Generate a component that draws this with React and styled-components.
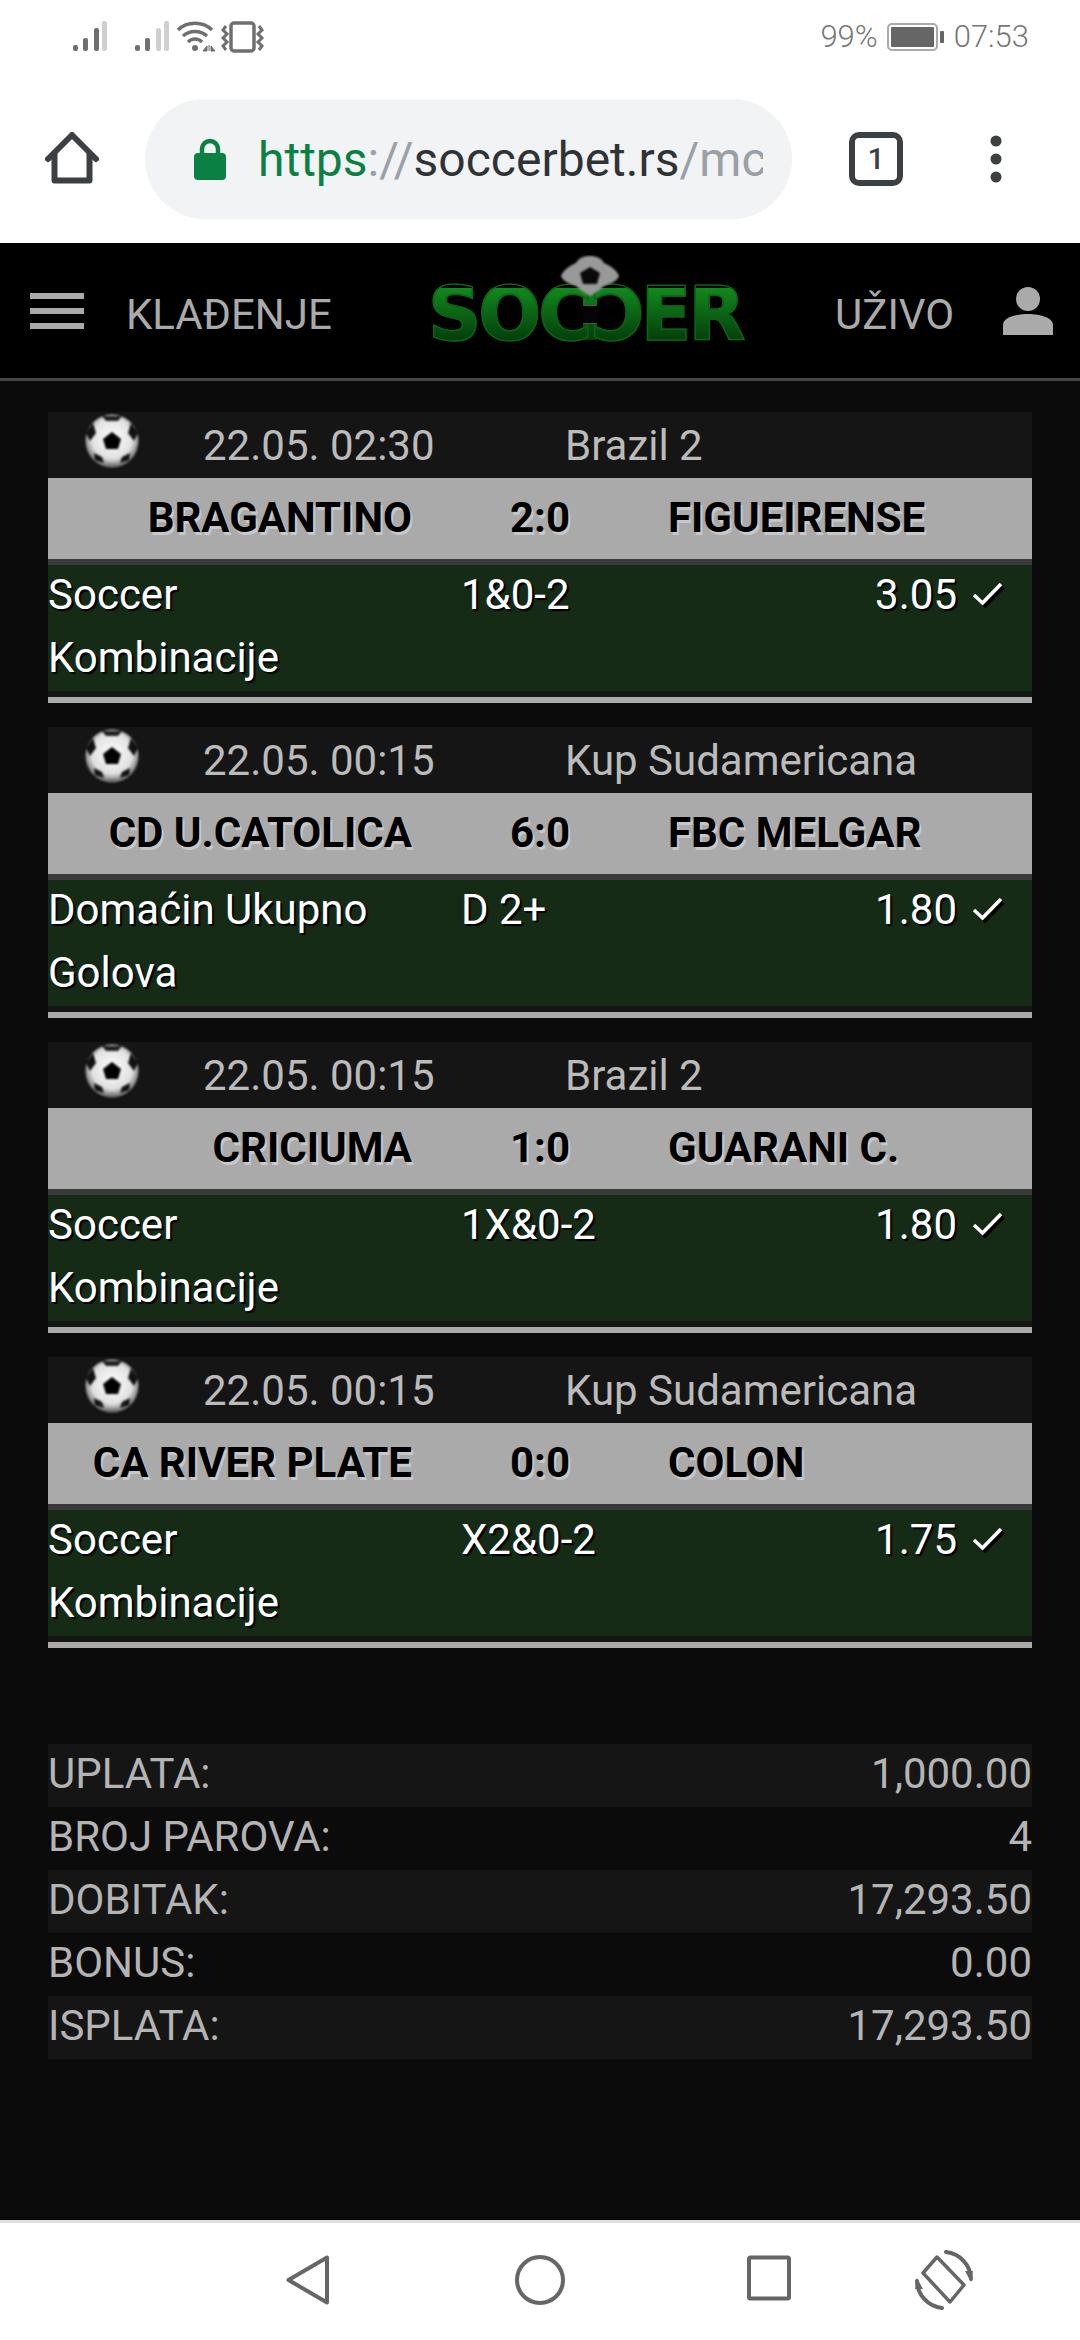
import React from "react";
import styled, { createGlobalStyle } from "styled-components";

const tickets = [
  { time: "22.05. 02:30", league: "Brazil 2", home: "BRAGANTINO", score: "2:0", away: "FIGUEIRENSE", market: "Soccer Kombinacije", pick: "1&0-2", odd: "3.05" },
  { time: "22.05. 00:15", league: "Kup Sudamericana", home: "CD U.CATOLICA", score: "6:0", away: "FBC MELGAR", market: "Domaćin Ukupno Golova", pick: "D 2+", odd: "1.80" },
  { time: "22.05. 00:15", league: "Brazil 2", home: "CRICIUMA", score: "1:0", away: "GUARANI C.", market: "Soccer Kombinacije", pick: "1X&0-2", odd: "1.80" },
  { time: "22.05. 00:15", league: "Kup Sudamericana", home: "CA RIVER PLATE", score: "0:0", away: "COLON", market: "Soccer Kombinacije", pick: "X2&0-2", odd: "1.75" },
];

const summary = [
  ["UPLATA:", "1,000.00"],
  ["BROJ PAROVA:", "4"],
  ["DOBITAK:", "17,293.50"],
  ["BONUS:", "0.00"],
  ["ISPLATA:", "17,293.50"],
];

const Signal = ({ x, lit }) => (
  <g>
    {[
      [0, 24, 6],
      [10, 17, 13],
      [21, 7, 23],
      [29, 0, 30],
    ].map(([dx, y, h], i) => (
      <rect key={i} x={x + dx} y={y} width="5" height={h} rx="2" fill={i < lit ? "#6f6f6f" : "#cfcfcf"} />
    ))}
  </g>
);

const StatusIcons = () => (
  <svg width="192" height="32" viewBox="0 0 192 32">
    <Signal x={0} lit={3} />
    <Signal x={62} lit={2} />
    <g fill="none" stroke="#6f6f6f" strokeWidth="3.5">
      <path d="M105 9 C114 0 130 0 139 9" />
      <path d="M110 15 C117 9 127 9 134 15" />
      <path d="M115 21 C119 17 125 17 129 21" />
    </g>
    <circle cx="122" cy="27" r="3" fill="#6f6f6f" />
    <path d="M130 30 L134 25 V30 Z M136 24 V30 M138 25 L142 30 H138 Z" fill="#6f6f6f" stroke="#6f6f6f" strokeWidth="1" />
    <rect x="158" y="2" width="23" height="28" rx="3" fill="none" stroke="#6f6f6f" strokeWidth="3.5" />
    <path d="M153 5 L150 9 L154 13 L150 17 L154 21 L150 25 L153 29" fill="none" stroke="#6f6f6f" strokeWidth="3" />
    <path d="M186 5 L189 9 L185 13 L189 17 L185 21 L189 25 L186 29" fill="none" stroke="#6f6f6f" strokeWidth="3" />
  </svg>
);

const Battery = () => (
  <svg width="58" height="28" viewBox="0 0 58 28">
    <rect x="1" y="1" width="49" height="26" rx="4" fill="none" stroke="#aaa" strokeWidth="2" />
    <rect x="4" y="4" width="43" height="20" rx="1" fill="#666" />
    <rect x="53" y="8" width="4" height="12" rx="1" fill="#666" />
  </svg>
);

const HomeIcon = () => (
  <svg width="54" height="54" viewBox="0 0 54 54" fill="none" stroke="#3c4043" strokeWidth="6" strokeLinecap="round" strokeLinejoin="round">
    <path d="M3 27 L27 3 L51 27" />
    <path d="M9.500 22 V48.500 H44.500 V22" />
  </svg>
);

const LockIcon = () => (
  <svg width="32" height="42" viewBox="0 0 32 42">
    <path d="M8 18 V11 A8 8 0 0 1 24 11 V18" fill="none" stroke="#0b8043" strokeWidth="4.500" />
    <rect x="0" y="15" width="32" height="27" rx="4" fill="#0b8043" />
  </svg>
);

const MenuDots = () => (
  <svg width="12" height="48" viewBox="0 0 12 48" fill="#3c4043">
    <circle cx="6" cy="6" r="5.500" />
    <circle cx="6" cy="24" r="5.500" />
    <circle cx="6" cy="42" r="5.500" />
  </svg>
);

const PersonIcon = () => (
  <svg width="50" height="48" viewBox="0 0 50 48" fill="#aaa">
    <ellipse cx="25" cy="12" rx="12" ry="12" />
    <path d="M0 48 V38 C0 31 12 27 25 27 C38 27 50 31 50 38 V48 Z" />
  </svg>
);

const Ball = () => (
  <svg width="58" height="56" viewBox="0 0 58 56">
    <defs>
      <radialGradient id="ballShade" cx="50%" cy="45%" r="55%">
        <stop offset="0%" stopColor="#fff" />
        <stop offset="70%" stopColor="#e0e0e0" />
        <stop offset="100%" stopColor="#666" />
      </radialGradient>
    </defs>
    <g style={{ filter: "blur(1.2px)" }}>
      <circle cx="29" cy="28" r="26.500" fill="url(#ballShade)" />
      <path d="M29 19 L38 26 L35 36 L23 36 L20 26 Z" fill="#000" />
      <path d="M19 3 L39 3 L35 8 L23 8 Z" fill="#222" />
      <path d="M3 20 L10 10 L13 20 L7 28 Z" fill="#111" />
      <path d="M55 20 L48 10 L45 20 L51 28 Z" fill="#111" />
      <path d="M11 40 L19 44 L21 50 L12 47 Z" fill="#111" />
      <path d="M47 40 L39 44 L37 50 L46 47 Z" fill="#111" />
      <path d="M20 51 L38 51 L34 54 L24 54 Z" fill="#777" />
    </g>
  </svg>
);

const LogoBall = () => (
  <svg width="62" height="42" viewBox="0 0 62 42">
    <g style={{ filter: "blur(1px)" }}>
      <path d="M31 1 C38 1 42 3 45 8 C50 10 58 15 60 21 C58 27 50 29 45 31 C41 35 36 38 31 41 C26 38 21 35 17 31 C12 29 4 27 2 21 C4 15 12 10 17 8 C20 3 24 1 31 1 Z" fill="#999" />
      <path d="M31 12 L41 18 L38 29 L24 29 L21 18 Z" fill="#0a0a0a" />
    </g>
  </svg>
);

const Check = () => (
  <svg width="33" height="26" viewBox="0 0 33 26" fill="none" strokeWidth="3.5">
    <path d="M3 14 L11.500 22 L30 3" stroke="#000" transform="translate(1.500 2)" />
    <path d="M2 13 L10.500 21 L29 2" stroke="#fff" />
  </svg>
);

const BackIcon = () => (
  <svg width="44" height="50" viewBox="0 0 44 50" fill="none" stroke="#666" strokeWidth="4" strokeLinejoin="round">
    <path d="M41 2.500 V47.500 L2.500 25 Z" />
  </svg>
);

const CircleIcon = () => (
  <svg width="50" height="50" viewBox="0 0 50 50" fill="none" stroke="#666" strokeWidth="4">
    <circle cx="25" cy="25" r="23" />
  </svg>
);

const SquareIcon = () => (
  <svg width="44" height="46" viewBox="0 0 44 46" fill="none" stroke="#666" strokeWidth="4">
    <rect x="2" y="2.500" width="40" height="41" rx="1.500" />
  </svg>
);

const RotateIcon = () => (
  <svg width="60" height="60" viewBox="0 0 60 60" fill="none" stroke="#666" strokeWidth="4" strokeLinejoin="round">
    <path d="M23 7 L50 35 L36 52 L9 23 Z" strokeWidth="3.500" />
    <path d="M32 2 A28 28 0 0 1 57 29" strokeLinecap="round" />
    <path d="M28 58 A28 28 0 0 1 3 31" strokeLinecap="round" />
    <path d="M51 21 L57 32 L59 21 Z" fill="#666" stroke="none" />
    <path d="M9 39 L3 28 L1 39 Z" fill="#666" stroke="none" />
  </svg>
);

const App = () => (
  <Page>
    <GlobalStyle />
    <StatusBar>
      <StatusIcons />
      <StatusRight>
        <span>99%</span>
        <Battery />
        <span>07:53</span>
      </StatusRight>
    </StatusBar>

    <BrowserBar>
      <HomeIcon />
      <UrlPill>
        <LockIcon />
        <UrlText>
          <Scheme>https</Scheme>
          <Faded>://</Faded>
          soccerbet.rs
          <Faded>/mc</Faded>
        </UrlText>
      </UrlPill>
      <TabCount>1</TabCount>
      <MenuDots />
    </BrowserBar>

    <Header>
      <Burger>
        <span />
        <span />
        <span />
      </Burger>
      <HeaderLink>KLAĐENJE</HeaderLink>
      <Logo>
        <LogoJoint />
        <LogoLetter>S</LogoLetter>
        <LogoLetter>O</LogoLetter>
        <LogoLetter>C</LogoLetter>
        <LogoLetter $mirror>C</LogoLetter>
        <LogoLetter>E</LogoLetter>
        <LogoLetter>R</LogoLetter>
        <LogoBallSpot>
          <LogoBall />
        </LogoBallSpot>
      </Logo>
      <HeaderLink>UŽIVO</HeaderLink>
      <PersonIcon />
    </Header>

    <Main>
      <TicketList>
        {tickets.map((t, i) => (
          <Ticket key={i}>
            <MetaRow>
              <BallSlot>
                <Ball />
              </BallSlot>
              <span>{t.time}</span>
              <span>{t.league}</span>
            </MetaRow>
            <TeamsRow>
              <Home>{t.home}</Home>
              <Score>{t.score}</Score>
              <span>{t.away}</span>
            </TeamsRow>
            <BetRow>
              <Market>{t.market}</Market>
              <span>{t.pick}</span>
              <Odd>
                {t.odd}
                <Check />
              </Odd>
            </BetRow>
          </Ticket>
        ))}
      </TicketList>

      <Summary>
        {summary.map(([label, value]) => (
          <SummaryRow key={label}>
            <span>{label}</span>
            <span>{value}</span>
          </SummaryRow>
        ))}
      </Summary>
    </Main>

    <NavBar>
      <BackIcon />
      <CircleIcon />
      <SquareIcon />
      <RotateIcon />
    </NavBar>
  </Page>
);

export default App;

// styles

const GlobalStyle = createGlobalStyle`
  html, body {
    margin: 0;
    padding: 0;
    background: #fff;
  }
  * {
    box-sizing: border-box;
  }
`;

const Page = styled.div`
  width: 1080px;
  height: 2340px;
  display: flex;
  flex-direction: column;
  font-family: Roboto, "Liberation Sans", sans-serif;
  font-size: 42px;
  line-height: 63px;
  overflow: hidden;
`;

const StatusBar = styled.div`
  height: 96px;
  flex: none;
  display: flex;
  align-items: flex-start;
  justify-content: space-between;
  padding: 21px 51px 0 73px;
  background: #fff;
`;

const StatusRight = styled.div`
  display: flex;
  align-items: center;
  gap: 9px;
  height: 32px;
  color: #777;
  font-size: 31px;
  font-weight: 300;
  line-height: 32px;
`;

const BrowserBar = styled.div`
  height: 147px;
  flex: none;
  display: flex;
  align-items: flex-start;
  padding: 3px 0 0 45px;
  background: #fff;
  > svg:first-child {
    margin-top: 33px;
  }
  > svg:last-child {
    margin: 36px 0 0 87px;
  }
`;

const UrlPill = styled.div`
  width: 647px;
  height: 120px;
  margin-left: 46px;
  padding-left: 49px;
  border-radius: 60px;
  background: #f1f3f4;
  display: flex;
  align-items: center;
  gap: 32px;
`;

const UrlText = styled.div`
  width: 505px;
  overflow: hidden;
  white-space: nowrap;
  color: #303336;
  font-size: 48px;
`;

const Scheme = styled.span`
  color: #0b8043;
`;

const Faded = styled.span`
  color: #9aa0a6;
`;

const TabCount = styled.div`
  width: 54px;
  height: 54px;
  margin: 33px 0 0 57px;
  border: 6px solid #3c4043;
  border-radius: 10px;
  display: flex;
  align-items: center;
  justify-content: center;
  color: #3c4043;
  font-size: 30px;
  font-weight: 500;
  line-height: 1;
`;

const Header = styled.header`
  height: 138px;
  flex: none;
  display: grid;
  grid-template-columns: 126px 306px 403px 168px 1fr;
  align-items: start;
  padding: 40px 0 0;
  background: #000;
  border-bottom: 3px solid #444;
  color: #aaa;
  > svg {
    margin-top: 4px;
  }
`;

const Burger = styled.div`
  display: flex;
  flex-direction: column;
  gap: 9px;
  width: 54px;
  margin: 10px 0 0 30px;
  span {
    height: 6px;
    background: #aaa;
  }
`;

const HeaderLink = styled.span`
  font-size: 42px;
`;

const Logo = styled.div`
  position: relative;
  display: flex;
  width: 311px;
  height: 53px;
  margin: 5px 0 0 -4px;
  font-family: "DejaVu Sans", sans-serif;
  font-size: 74px;
  font-weight: 700;
  line-height: 53px;
`;

const LogoBallSpot = styled.div`
  position: absolute;
  left: 131px;
  top: -33px;
  line-height: 0;
`;

const LogoJoint = styled.div`
  position: absolute;
  left: 155px;
  top: 2px;
  width: 14px;
  height: 50px;
  background: linear-gradient(
    #12891f 0%,
    #0e6f18 30%,
    #777 30%,
    #050505 33%,
    #050505 65%,
    #777 68%,
    #07500d 68%,
    #043d0a 100%
  );
`;

const LogoLetter = styled.span`
  position: relative;
  margin-right: -3px;
  background: linear-gradient(#12891f, #043d0a);
  background-clip: text;
  -webkit-background-clip: text;
  color: transparent;
  -webkit-text-stroke: 1.5px #0b6315;
  transform: ${(p) => (p.$mirror ? "scaleX(-1)" : "none")};
`;

const Main = styled.main`
  flex: 1;
  padding: 31px 48px 0;
  background: #0b0b0b;
`;

const TicketList = styled.div`
  display: flex;
  flex-direction: column;
  gap: 24px;
`;

const Ticket = styled.section`
  height: 291px;
  border-bottom: 6px solid #aaa;
`;

const MetaRow = styled.div`
  height: 66px;
  display: grid;
  grid-template-columns: 155px 362px 1fr;
  background: #151515;
  color: #bbb;
  line-height: 68px;
`;

const BallSlot = styled.div`
  padding: 1px 0 0 35px;
  line-height: 0;
`;

const TeamsRow = styled.div`
  height: 87px;
  display: grid;
  grid-template-columns: 1fr 256px 1fr;
  background: #aaa;
  border-bottom: 6px solid #3a3a3a;
  color: #000;
  font-weight: 700;
  line-height: 80px;
  text-shadow: 2px 3px 0 #c8c8c8;
`;

const Home = styled.span`
  text-align: right;
`;

const Score = styled.span`
  text-align: center;
`;

const BetRow = styled.div`
  height: 132px;
  display: grid;
  grid-template-columns: 413px 1fr auto;
  padding-right: 27px;
  background: #162b16;
  border-bottom: 6px solid #151515;
  color: #fff;
  text-shadow: 2px 2px 1px #000;
  > * {
    margin-top: -2px;
  }
`;

const Market = styled.span`
  width: 340px;
`;

const Odd = styled.span`
  display: flex;
  align-items: flex-start;
  gap: 15px;
  svg {
    margin-top: 19px;
  }
`;

const Summary = styled.div`
  margin-top: 96px;
`;

const SummaryRow = styled.div`
  height: 63px;
  display: flex;
  justify-content: space-between;
  color: #b4b4b4;
  line-height: 60px;
  &:nth-child(odd) {
    background: #151515;
  }
`;

const NavBar = styled.nav`
  height: 120px;
  flex: none;
  display: grid;
  grid-template-columns: 232px 232px 226px 124px;
  justify-items: center;
  padding: 32px 0 0 192px;
  background: #fff;
  border-top: 3px solid #e0e0e0;
  svg:nth-child(4) {
    margin-top: -5px;
  }
`;
